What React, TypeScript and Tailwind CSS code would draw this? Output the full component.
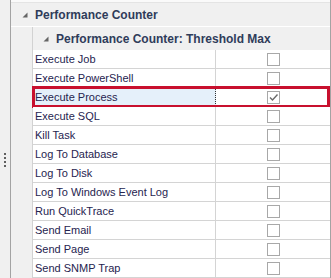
import React from 'react';

const rows = [
  { label: 'Execute Job', checked: false },
  { label: 'Execute PowerShell', checked: false },
  { label: 'Execute Process', checked: true, selected: true },
  { label: 'Execute SQL', checked: false },
  { label: 'Kill Task', checked: false },
  { label: 'Log To Database', checked: false },
  { label: 'Log To Disk', checked: false },
  { label: 'Log To Windows Event Log', checked: false },
  { label: 'Run QuickTrace', checked: false },
  { label: 'Send Email', checked: false },
  { label: 'Send Page', checked: false },
  { label: 'Send SNMP Trap', checked: false },
];

function Expander() {
  return (
    <svg width="6" height="6" viewBox="0 0 6 6" className="shrink-0">
      <polygon points="5.5,0.5 5.5,5.5 0.5,5.5" fill="#656565" />
    </svg>
  );
}

function Checkbox({ checked }: { checked: boolean }) {
  return (
    <div className="w-[13px] h-[13px] border border-[#a8a8a8] bg-white flex items-center justify-center">
      {checked && (
        <svg width="11" height="11" viewBox="0 0 11 11">
          <path d="M2 5.5 L4.5 8 L9.5 2.5" fill="none" stroke="#6a6a6a" strokeWidth="1.4" />
        </svg>
      )}
    </div>
  );
}

export default function App() {
  return (
    <div
      className="w-[331px] h-[278px] overflow-hidden flex bg-[#f0f0f0]"
      style={{ fontFamily: '"Liberation Sans", Arial, sans-serif' }}
    >
      {/* splitter */}
      <div className="w-[10px] shrink-0 flex flex-col items-center pt-[153px] gap-[2px]">
        <div className="w-[2px] h-[2px] bg-[#5f5f5f]" />
        <div className="w-[2px] h-[2px] bg-[#5f5f5f]" />
        <div className="w-[2px] h-[2px] bg-[#5f5f5f]" />
        <div className="w-[2px] h-[2px] bg-[#5f5f5f]" />
      </div>
      <div className="w-[1px] shrink-0 bg-[#a3a3a3]" />

      <div className="flex-1 flex flex-col border-r border-[#a3a3a3]">
        <div className="h-[2px] bg-[#fafafa] border-b border-[#e4e4e4] box-content" />
        <div className="h-[23px] flex items-center gap-[7px] pl-[11px] border-b border-white box-content">
          <Expander />
          <span className="text-[12px] font-bold text-[#2f3c5a]">Performance Counter</span>
        </div>

        <div className="flex flex-1">
          <div className="w-[21px] shrink-0" />
          <div className="flex-1 flex flex-col border-l border-[#d2d2d2]">
            <div className="h-[23px] flex items-center gap-[7px] pl-[10px] bg-[#f0f0f0]">
              <Expander />
              <span className="text-[12px] font-bold text-[#2f3c5a]">
                Performance Counter: Threshold Max
              </span>
            </div>
            {rows.map((r) => (
              <div
                key={r.label}
                className="relative h-[19px] flex border-b border-[#d4d4d4] bg-white"
              >
                <div
                  className={`w-[183px] shrink-0 flex items-center pl-[2px] text-[11px] text-[#26244f] ${
                    r.selected
                      ? 'bg-[#e5f0fa] border-r border-dotted border-[#333]'
                      : 'border-r border-[#d4d4d4]'
                  }`}
                >
                  {r.label}
                </div>
                <div className="flex-1 flex items-center justify-center">
                  <Checkbox checked={r.checked} />
                </div>
                {r.selected && (
                  <div className="absolute left-[-1px] right-0 top-[-2px] bottom-[-2px] border-[3px] border-[#c8102e]" />
                )}
              </div>
            ))}
          </div>
        </div>
      </div>
    </div>
  );
}
